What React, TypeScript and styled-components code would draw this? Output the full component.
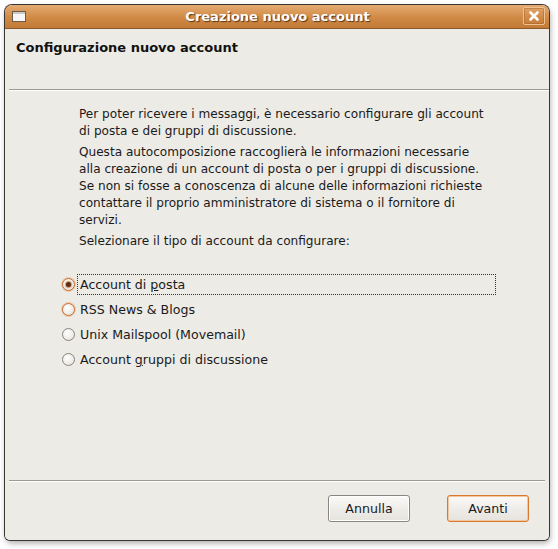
import React from "react";
import styled, { createGlobalStyle } from "styled-components";

const Global = createGlobalStyle`
  html, body { margin: 0; padding: 0; background: #ffffff; }
  body { font-family: "DejaVu Sans", "Liberation Sans", sans-serif; font-size: 13px; color: #1a1a1a; }
`;

const Page = styled.div`
  width: 558px;
  height: 549px;
  padding: 5px 0 0 5px;
  box-sizing: border-box;
`;

const Window = styled.div`
  width: 544px;
  height: 535px;
  display: flex;
  flex-direction: column;
  border-radius: 7px 7px 5px 5px;
  overflow: hidden;
  box-shadow: 0 0 0 1px #3a3632, 1px 3px 6px rgba(0, 0, 0, 0.35);
  background: #edebe6;
`;

const TitleBar = styled.div`
  height: 23px;
  flex: none;
  display: flex;
  align-items: center;
  padding: 0 4px 0 7px;
  background: linear-gradient(#e4ab72, #d08a45 55%, #c27a36);
  border-bottom: 1px solid #8b5a2b;
`;

const WinIcon = styled.div`
  width: 12px;
  height: 9px;
  border: 1px solid #6e5a45;
  background: linear-gradient(#c9c9c9 0 2px, #f6f6f6 2px);
  flex: none;
`;

const Title = styled.div`
  flex: 1;
  text-align: center;
  color: #ffffff;
  font-weight: bold;
  font-size: 13px;
  text-shadow: 1px 1px 1px #5a3411;
  padding-left: 6px;
`;

const CloseBtn = styled.div`
  width: 20px;
  height: 16px;
  border: 1px solid #f0c08e;
  border-radius: 2px;
  box-shadow: inset 0 0 0 1px rgba(140, 80, 30, 0.35);
  display: flex;
  align-items: center;
  justify-content: center;
  margin-top: -1px;
`;

const Content = styled.div`
  flex: 1;
  display: flex;
  flex-direction: column;
  background: #edebe6;
`;

const Header = styled.div`
  height: 60px;
  box-sizing: border-box;
  padding: 10px 11px 0;
  font-weight: bold;
  line-height: 17px;
  color: #111;
`;

const Separator = styled.div<{ $right: number }>`
  height: 1px;
  background: #a09b92;
  border-bottom: 1px solid #ffffff;
  margin: 0 ${(p) => p.$right}px 0 4px;
`;

const Body = styled.div`
  padding: 15px 0 0 74px;
  line-height: 17px;
  font-size: 12.1px;
  color: #1a1a1a;
`;

const Para = styled.p<{ $gap: number }>`
  margin: 0 0 ${(p) => p.$gap}px;
`;

const RadioList = styled.div`
  margin-top: 22px;
  margin-left: -18px;
  display: flex;
  flex-direction: column;
  font-size: 12.6px;
`;

const RadioRow = styled.div`
  height: 25px;
  display: flex;
  align-items: center;
`;

const Circle = styled.span<{ $state: "checked" | "hover" | "normal" }>`
  width: 13px;
  height: 13px;
  box-sizing: border-box;
  border-radius: 50%;
  flex: none;
  margin-left: 1px;
  border: 1px solid ${(p) => (p.$state === "normal" ? "#8a857d" : "#c9692a")};
  background: radial-gradient(circle at 40% 35%, #ffffff, #ebe8e3 70%, #d9d5cf);
  box-shadow: ${(p) => (p.$state === "normal" ? "none" : "0 0 0 1px rgba(240,160,90,0.45)")};
  display: flex;
  align-items: center;
  justify-content: center;
  &::after {
    content: "";
    width: 5px;
    height: 5px;
    border-radius: 50%;
    background: #5a2e12;
    display: ${(p) => (p.$state === "checked" ? "block" : "none")};
    box-shadow: 0 0 1px 1px rgba(190, 90, 30, 0.6);
  }
`;

const Label = styled.span<{ $focus?: boolean }>`
  margin-left: 2px;
  padding: 1px 2px;
  line-height: 17px;
  border: 1px dotted ${(p) => (p.$focus ? "#333" : "transparent")};
  width: ${(p) => (p.$focus ? "413px" : "auto")};
`;

const Spacer = styled.div`
  flex: 1;
`;

const Footer = styled.div`
  height: 58px;
  box-sizing: border-box;
  display: flex;
  justify-content: flex-end;
  align-items: flex-start;
  gap: 37px;
  padding: 13px 20px 0 0;
`;

const Button = styled.button<{ $default?: boolean }>`
  width: 82px;
  height: 27px;
  font-family: "DejaVu Sans", "Liberation Sans", sans-serif;
  font-size: 12.6px;
  color: #1a1a1a;
  border-radius: 3px;
  border: 1px solid ${(p) => (p.$default ? "#d9782f" : "#8c877e")};
  background: linear-gradient(#fbfaf8, #efede9 50%, #e6e3de);
  box-shadow: ${(p) => (p.$default ? "inset 0 0 0 1px #f3c79d" : "inset 0 0 0 1px #ffffff")};
  padding: 0;
`;

const radios: { label: React.ReactNode; state: "checked" | "hover" | "normal" }[] = [
  { label: <>Account di <u>p</u>osta</>, state: "checked" },
  { label: <>RSS News &amp; Blogs</>, state: "hover" },
  { label: <>Unix Mailspool (Movemail)</>, state: "normal" },
  { label: <>Account <u>g</u>ruppi di discussione</>, state: "normal" },
];

export default function App() {
  return (
    <>
      <Global />
      <Page>
        <Window>
          <TitleBar>
            <WinIcon />
            <Title>Creazione nuovo account</Title>
            <CloseBtn>
              <svg width="12" height="12" viewBox="0 0 12 12">
                <path d="M2.5 2.5 L9.5 9.5 M9.5 2.5 L2.5 9.5" stroke="#fff" strokeWidth="2.6" strokeLinecap="round" />
              </svg>
            </CloseBtn>
          </TitleBar>
          <Content>
            <Header>Configurazione nuovo account</Header>
            <Separator $right={0} />
            <Body>
              <Para $gap={4}>
                Per poter ricevere i messaggi, è necessario configurare gli account
                <br />
                di posta e dei gruppi di discussione.
              </Para>
              <Para $gap={4}>
                Questa autocomposizione raccoglierà le informazioni necessarie
                <br />
                alla creazione di un account di posta o per i gruppi di discussione.
                <br />
                Se non si fosse a conoscenza di alcune delle informazioni richieste
                <br />
                contattare il proprio amministratore di sistema o il fornitore di
                <br />
                servizi.
              </Para>
              <Para $gap={0}>Selezionare il tipo di account da configurare:</Para>
              <RadioList>
                {radios.map((r, i) => (
                  <RadioRow key={i}>
                    <Circle $state={r.state} />
                    <Label $focus={i === 0}>{r.label}</Label>
                  </RadioRow>
                ))}
              </RadioList>
            </Body>
            <Spacer />
            <Separator $right={4} />
            <Footer>
              <Button>Annulla</Button>
              <Button $default>Avanti</Button>
            </Footer>
          </Content>
        </Window>
      </Page>
    </>
  );
}
